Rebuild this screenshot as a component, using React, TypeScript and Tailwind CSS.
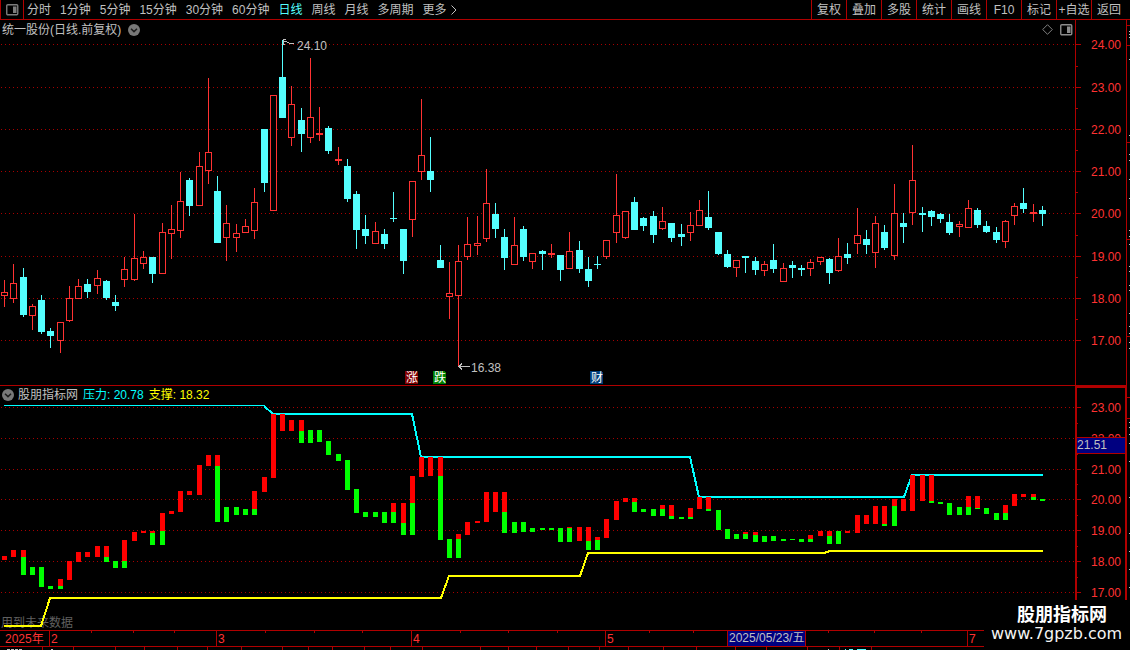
import React from "react";

type Tone = "r" | "c";
// high, body top, body bottom, low, tone
type Candle = [number, number, number, number, Tone];
// top, split between red and green, bottom
type Bar = [number, number, number];

const CANDLES: Candle[] = [
  [280, 292, 296, 307, "r"], [264, 283, 299, 303, "r"], [268, 277, 315, 317, "c"], [304, 306, 316, 330, "r"],
  [295, 300, 332, 334, "c"], [328, 331, 336, 348, "c"], [322, 322, 341, 353, "r"], [286, 298, 321, 322, "r"],
  [279, 286, 299, 299, "r"], [279, 284, 292, 298, "c"], [270, 278, 286, 294, "r"], [280, 281, 298, 300, "c"],
  [295, 302, 306, 311, "c"], [257, 269, 280, 287, "r"], [214, 258, 280, 281, "r"], [251, 257, 264, 269, "r"],
  [257, 257, 274, 283, "c"], [223, 232, 274, 274, "r"], [205, 229, 234, 259, "r"], [172, 201, 231, 238, "r"],
  [178, 180, 206, 216, "c"], [152, 166, 206, 206, "r"], [78, 152, 171, 184, "r"], [176, 191, 243, 243, "c"],
  [205, 223, 238, 261, "r"], [224, 233, 238, 252, "r"], [219, 226, 233, 233, "r"], [188, 202, 231, 239, "r"],
  [129, 129, 183, 192, "c"], [95, 95, 211, 211, "r"], [40, 77, 118, 118, "c"], [86, 104, 138, 146, "r"],
  [108, 120, 134, 152, "c"], [58, 117, 138, 143, "r"], [107, 133, 135, 141, "r"], [126, 128, 151, 154, "c"],
  [147, 159, 161, 165, "r"], [159, 166, 199, 202, "c"], [191, 194, 230, 249, "c"], [215, 229, 236, 244, "c"],
  [222, 231, 244, 244, "r"], [229, 234, 244, 249, "c"], [192, 218, 219, 222, "c"], [229, 229, 261, 274, "c"],
  [181, 181, 220, 237, "r"], [99, 155, 172, 180, "r"], [137, 171, 180, 192, "c"], [245, 260, 268, 268, "c"],
  [262, 293, 297, 319, "r"], [245, 261, 296, 366, "r"], [217, 244, 257, 260, "r"], [216, 243, 246, 255, "r"],
  [169, 203, 239, 242, "r"], [203, 214, 229, 238, "c"], [229, 237, 258, 270, "c"], [217, 245, 265, 265, "r"],
  [226, 229, 257, 261, "c"], [253, 253, 262, 269, "r"], [250, 251, 254, 270, "c"], [244, 253, 255, 258, "r"],
  [255, 255, 270, 281, "c"], [232, 251, 269, 269, "r"], [241, 250, 269, 273, "c"], [257, 269, 281, 287, "c"],
  [256, 264, 265, 269, "c"], [240, 240, 257, 259, "r"], [174, 215, 233, 243, "r"], [211, 211, 238, 239, "r"],
  [197, 202, 230, 230, "c"], [217, 218, 226, 231, "c"], [211, 216, 235, 243, "c"], [207, 221, 229, 230, "r"],
  [223, 223, 238, 242, "c"], [224, 234, 237, 246, "c"], [212, 225, 233, 241, "r"], [200, 210, 226, 226, "r"],
  [191, 217, 228, 230, "c"], [232, 232, 254, 255, "c"], [250, 254, 267, 268, "c"], [260, 260, 268, 277, "r"],
  [256, 256, 258, 273, "c"], [257, 261, 270, 275, "c"], [261, 264, 271, 276, "r"], [244, 260, 269, 273, "c"],
  [263, 268, 282, 282, "r"], [261, 265, 268, 278, "c"], [265, 268, 270, 276, "c"], [259, 262, 269, 276, "r"],
  [257, 257, 262, 265, "r"], [258, 259, 273, 284, "c"], [238, 256, 271, 272, "r"], [243, 254, 258, 264, "c"],
  [208, 235, 244, 254, "r"], [230, 239, 245, 254, "c"], [216, 223, 253, 268, "r"], [225, 232, 248, 250, "c"],
  [184, 213, 256, 260, "r"], [213, 223, 227, 243, "c"], [145, 180, 213, 225, "r"], [207, 213, 215, 232, "c"],
  [210, 211, 217, 226, "c"], [213, 214, 219, 223, "c"], [214, 222, 233, 235, "c"], [221, 224, 227, 237, "r"],
  [200, 208, 228, 228, "r"], [208, 210, 225, 228, "c"], [221, 226, 232, 233, "c"], [227, 232, 240, 243, "c"],
  [220, 221, 242, 248, "r"], [203, 206, 216, 225, "r"], [188, 203, 209, 213, "c"], [204, 212, 214, 222, "r"],
  [206, 210, 214, 226, "c"],
];

const BARS: Bar[] = [
  [556, 560, 560], [550, 557, 557], [550, 557, 575], [567, 567, 575], [567, 567, 587], [586, 586, 589],
  [579, 586, 589], [561, 580, 580], [552, 562, 562], [552, 557, 557], [546, 557, 557], [546, 557, 562],
  [561, 561, 568], [540, 561, 568], [532, 541, 541], [531, 533, 533], [531, 533, 545], [513, 531, 545],
  [511, 514, 514], [491, 512, 512], [491, 495, 495], [465, 495, 495], [455, 466, 466], [455, 466, 522],
  [507, 507, 522], [507, 507, 515], [509, 509, 515], [491, 509, 515], [477, 492, 492], [414, 478, 478],
  [414, 431, 431], [420, 431, 431], [420, 431, 443], [430, 430, 443], [430, 430, 442], [441, 441, 455],
  [454, 454, 461], [460, 460, 490], [489, 489, 513], [512, 512, 517], [512, 512, 517], [512, 512, 523],
  [503, 512, 523], [503, 523, 535], [476, 503, 535], [457, 477, 477], [457, 476, 476], [457, 476, 540],
  [539, 539, 558], [534, 539, 558], [522, 535, 535], [521, 523, 523], [492, 522, 522], [492, 512, 512],
  [492, 512, 533], [522, 522, 533], [522, 522, 532], [528, 528, 532], [528, 528, 530], [528, 528, 530],
  [528, 528, 542], [527, 528, 542], [527, 541, 541], [527, 541, 550], [537, 540, 550], [519, 538, 538],
  [501, 520, 520], [498, 502, 502], [498, 502, 512], [509, 509, 512], [509, 509, 516], [505, 509, 516],
  [505, 516, 519], [517, 517, 519], [508, 517, 519], [497, 509, 509], [497, 509, 511], [510, 510, 530],
  [529, 529, 539], [534, 534, 539], [532, 534, 539], [532, 535, 542], [536, 536, 542], [536, 536, 541],
  [539, 539, 541], [539, 539, 540], [539, 539, 542], [535, 539, 542], [531, 536, 536], [531, 536, 544],
  [531, 531, 544], [531, 533, 533], [515, 533, 533], [515, 524, 524], [506, 524, 524], [506, 524, 526],
  [499, 506, 526], [499, 511, 511], [475, 511, 511], [475, 501, 501], [475, 501, 503], [502, 502, 504],
  [503, 503, 515], [507, 507, 515], [496, 507, 515], [496, 508, 509], [508, 508, 514], [513, 513, 520],
  [505, 513, 520], [494, 506, 506], [494, 497, 497], [494, 497, 500], [499, 499, 501],
];

const centre = (i: number) => Math.round(4 + i * 9.268);

const PERIODS = ["分时", "1分钟", "5分钟", "15分钟", "30分钟", "60分钟", "日线", "周线", "月线", "多周期"];
const TOOLS = ["复权", "叠加", "多股", "统计", "画线", "F10", "标记", "+自选", "返回"];

const PRICE_LEVELS: [string, number][] = [
  ["24.00", 44], ["23.00", 87], ["22.00", 129], ["21.00", 171], ["20.00", 213], ["19.00", 256], ["18.00", 298], ["17.00", 340],
];
const PRICE_MINOR = [66, 108, 150, 192, 235, 277, 319];
const STUDY_LEVELS: [string, number][] = [
  ["23.00", 407], ["22.00", 438], ["21.00", 469], ["20.00", 499], ["19.00", 530], ["18.00", 561], ["17.00", 592],
];
const STUDY_MINOR = [423, 454, 484, 515, 546, 577];
const MONTHS: [string, number][] = [["2", 49], ["3", 216], ["4", 411], ["5", 605], ["7", 967]];
const WEEK_TICKS = [91, 133, 174, 265, 314, 362, 460, 508, 557, 649, 693, 828, 874, 921];
const FOOTER_TICKS = [
  42, 73, 115, 144, 177, 207, 241, 282, 308, 332, 364, 390, 422, 480, 508, 536, 568, 599, 628, 663, 696, 735, 766, 807, 839, 871,
];
const EDGE_RED = [25, 45, 142, 239, 336, 397, 418];
const EDGE_GREY = [
  31, 34, 37, 59, 135, 154, 160, 179, 198, 230, 236, 244, 266, 271, 285, 290, 313, 326, 333, 342, 348, 422, 427, 434, 443, 461, 497,
  533, 551, 569, 587,
];

function PanelIcon({ className }: { className: string }) {
  return (
    <svg width="13" height="12" viewBox="0 0 13 12" className={className} aria-hidden="true">
      <rect x="0.75" y="0.75" width="11" height="10" rx="1" fill="none" stroke="currentColor" strokeWidth="1.4" />
      <rect x="7" y="2.5" width="3.5" height="6.5" fill="currentColor" />
    </svg>
  );
}

function RoundChevron() {
  return (
    <svg width="12" height="12" viewBox="0 0 12 12" aria-hidden="true">
      <circle cx="6" cy="6" r="6" fill="#787878" />
      <path d="M3 4.8 L6 7.6 L9 4.8" fill="none" stroke="#1c1c1c" strokeWidth="1.5" />
    </svg>
  );
}

function Toolbar() {
  return (
    <header className="flex h-5 justify-between border-b border-[#b00000] pr-1">
      <nav className="flex items-center">
        <button aria-label="侧栏" className="flex h-full w-6 items-center justify-center border-x border-[#b00000]">
          <PanelIcon className="text-[#7c7c7c]" />
        </button>
        <div className="flex items-center gap-[9px] pl-[3px]">
          {PERIODS.map((p) => (
            <button key={p} className={p === "日线" ? "text-[#54ffff]" : "text-[#c0c0c0]"}>
              {p}
            </button>
          ))}
          <button className="flex items-center gap-1">
            更多
            <svg width="6" height="10" viewBox="0 0 6 10" aria-hidden="true">
              <path d="M0.5 0.5 L5 5 L0.5 9.5" fill="none" stroke="#c0c0c0" />
            </svg>
          </button>
        </div>
      </nav>
      <div className="flex">
        {TOOLS.map((t) => (
          <button key={t} className="flex w-[35px] items-center justify-center whitespace-nowrap border-l border-[#b00000]">
            {t}
          </button>
        ))}
      </div>
    </header>
  );
}

function Levels({ levels, minor, left }: { levels: [string, number][]; minor: number[]; left: number }) {
  return (
    <g>
      {levels.map(([label, y]) => (
        <g key={label}>
          <line x1="1" x2="1075" y1={y + 0.5} y2={y + 0.5} stroke="#a80000" strokeDasharray="1 3" />
          <rect x={left} y={y} width={1081 - left} height="1" fill="#b00000" />
          <text x="1091" y={y + 5} fill="#ff3232">{label}</text>
        </g>
      ))}
      {minor.map((y) => (
        <rect key={y} x={left} y={y} width={1078 - left} height="1" fill="#b00000" />
      ))}
    </g>
  );
}

function Edge({ from, to }: { from: number; to: number }) {
  return (
    <g>
      <rect x="1126" y={from} width="1" height={to - from} fill="#b00000" />
      {EDGE_RED.filter((y) => y >= from && y < to).map((y) => (
        <rect key={y} x="1127" y={y} width="3" height="1" fill="#b00000" />
      ))}
      {EDGE_GREY.filter((y) => y >= from && y < to).map((y) => (
        <rect key={y} x="1129" y={y} width="1" height="1" fill="#c0c0c0" />
      ))}
    </g>
  );
}

function EventBadge({ x, fill, label }: { x: number; fill: string; label: string }) {
  return (
    <g>
      <path d={`M${x} 371 h11 l2 2 v11 h-13 z`} fill={fill} />
      <text x={x + 1} y="382" fill="#ffffff">{label}</text>
    </g>
  );
}

function PricePanel() {
  return (
    <section className="relative">
      <svg viewBox="0 20 1130 366" className="block h-auto w-full" fontSize="12" shapeRendering="crispEdges" role="img" aria-label="日线">
        <Levels levels={PRICE_LEVELS} minor={PRICE_MINOR} left={1076} />
        <rect x="1075" y="20" width="1" height="366" fill="#b00000" />
        <rect x="0" y="385" width="1127" height="1" fill="#b00000" />
        <Edge from={20} to={386} />
        {CANDLES.map(([high, top, bottom, low, tone], i) => {
          const x = centre(i);
          const color = tone === "r" ? "#ff3232" : "#54ffff";
          const hollow = tone === "r" && bottom - top > 2;
          return (
            <g key={i} fill={color}>
              <rect x={x} y={high} width="1" height={low - high} />
              <rect x={x - 3} y={top} width="7" height={bottom - top} />
              {hollow && <rect x={x - 2} y={top + 1} width="5" height={bottom - top - 2} fill="#000000" />}
            </g>
          );
        })}
        <g fill="none" stroke="#c0c0c0">
          <path d="M283.5 41.5 H286 L290 43.5 H294 M286 39.5 H283.5 V44 H285" />
          <path d="M459 366.5 H470 M462 363.5 L459 366.5 L462 369.5" />
        </g>
        <text x="297" y="50" fill="#c0c0c0">24.10</text>
        <text x="471" y="372" fill="#c0c0c0">16.38</text>
        <EventBadge x={405} fill="#800000" label="涨" />
        <EventBadge x={433} fill="#008000" label="跌" />
        <EventBadge x={590} fill="#003c78" label="财" />
      </svg>
      <div className="absolute inset-x-0 top-0 flex h-[19px] items-center justify-between pl-[2px] pr-[57px]">
        <div className="flex items-center gap-[7px]">
          <h1>统一股份(日线.前复权)</h1>
          <button aria-label="展开"><RoundChevron /></button>
        </div>
        <div className="flex items-center gap-[7px]">
          <button aria-label="标记点">
            <svg width="11" height="11" viewBox="0 0 11 11" aria-hidden="true">
              <path d="M5.5 0.7 L10.3 5.5 L5.5 10.3 L0.7 5.5 Z" fill="none" stroke="#808080" />
            </svg>
          </button>
          <button aria-label="面板"><PanelIcon className="text-[#8c8c8c]" /></button>
        </div>
      </div>
    </section>
  );
}

function StudyPanel() {
  return (
    <section className="relative">
      <svg viewBox="0 386 1130 244" className="block h-auto w-full" fontSize="12" shapeRendering="crispEdges" role="img" aria-label="压力支撑">
        <Levels levels={STUDY_LEVELS} minor={STUDY_MINOR} left={1077} />
        <path d="M1076 630 V387 H1126 V630" fill="none" stroke="#b00000" strokeWidth="2" />
        <Edge from={386} to={630} />
        <rect x="1077" y="437" width="48" height="17" fill="#b00000" />
        <rect x="1077" y="438" width="48" height="15" fill="#000080" />
        <text x="1077" y="449" fill="#c0c0c0">21.51</text>
        <text x="1" y="627" fill="#606060">用到未来数据</text>
        <path d="M4 405.5 H264" stroke="#00ffff" />
        <g fill="none" strokeWidth="2">
          <path d="M264 406 L273 414 H412 L421 457 H690 L699 497 H904 L912 475 H1043" stroke="#00ffff" />
          <path d="M4 626 H41 L50 598 H441 L449 576 H580 L588 553 H824 L830 551 H1043" stroke="#ffff00" />
        </g>
        {BARS.map(([top, split, bottom], i) => {
          const x = centre(i) - 2;
          return (
            <g key={i}>
              <rect x={x} y={top} width="5" height={split - top} fill="#ff0000" />
              <rect x={x} y={split} width="5" height={bottom - split} fill="#00ff00" />
            </g>
          );
        })}
      </svg>
      <div className="absolute left-0 top-0 flex h-[17px] items-center gap-[5px] pl-[2px]">
        <div className="flex items-center gap-1">
          <button aria-label="指标菜单"><RoundChevron /></button>
          <h2>股朋指标网</h2>
        </div>
        <span className="text-[#00ffff]">压力: 20.78</span>
        <span className="text-[#ffff00]">支撑: 18.32</span>
      </div>
    </section>
  );
}

function TimeAxis() {
  return (
    <svg viewBox="0 630 1130 20" className="block h-auto w-full" fontSize="12" shapeRendering="crispEdges" role="img" aria-label="日期">
      <g fill="#b00000">
        <rect x="0" y="630" width="1127" height="1" />
        <rect x="0" y="646" width="1127" height="1" />
        {WEEK_TICKS.map((x) => <rect key={x} x={x} y="631" width="1" height="2" />)}
        {FOOTER_TICKS.map((x) => <rect key={x} x={x} y="647" width="1" height="3" />)}
      </g>
      <text x="5" y="643" fill="#ff3232">2025年</text>
      {MONTHS.map(([label, x]) => (
        <g key={label}>
          <rect x={x} y="631" width="1" height="15" fill="#b00000" />
          <text x={x + 2} y="643" fill="#ff3232">{label}</text>
        </g>
      ))}
      <rect x="727" y="631" width="79" height="15" fill="#b00000" />
      <rect x="728" y="631" width="77" height="15" fill="#000080" />
      <text x="729" y="642" fill="#c0c0c0">2025/05/23/五</text>
      <path d="M7 649.5 H22 M51 649.5 H53 M828 649.5 H829" stroke="#c0c0c0" strokeDasharray="3 1" />
      <path d="M845 649.5 H846 M849 649.5 H853 M857 649.5 H866" stroke="#54ffff" />
    </svg>
  );
}

export default function App() {
  return (
    <div className="min-h-screen bg-black font-['Liberation_Sans','Noto_Sans_CJK_SC',sans-serif] text-[12px] leading-4 text-[#c0c0c0]">
      <main className="relative">
        <Toolbar />
        <PricePanel />
        <StudyPanel />
        <TimeAxis />
        <div className="absolute bottom-0 right-0 flex h-[50px] w-[146px] flex-col bg-black pt-[5px]">
          <strong className="pl-[33px] text-[18px] font-bold leading-5 text-white">股朋指标网</strong>
          <span className="pl-[7px] font-['DejaVu_Sans',sans-serif] text-[16px] leading-[18px] text-[#f4f4f4]">www.7gpzb.com</span>
        </div>
      </main>
    </div>
  );
}
